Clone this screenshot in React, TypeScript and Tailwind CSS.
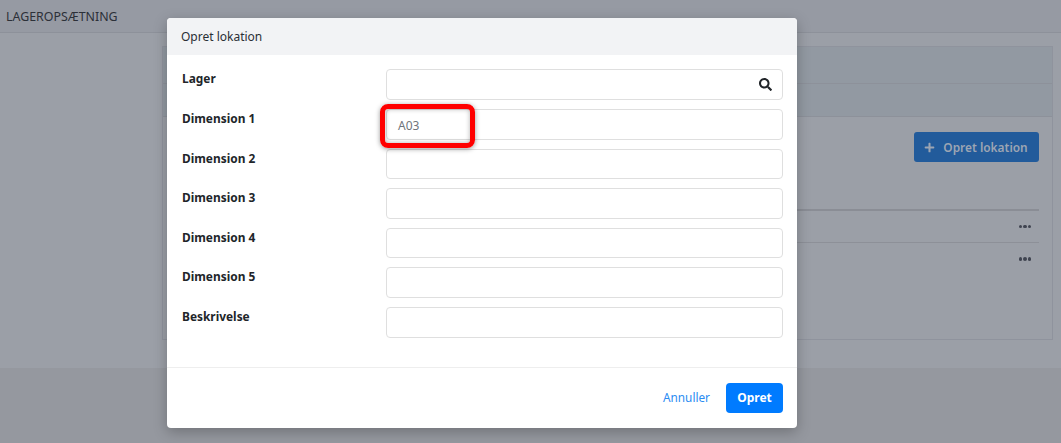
import { FaSearch, FaPlus } from "react-icons/fa";

const fields = [
  { label: "Dimension 1", value: "A03", h: "h-[31px]", mb: "mb-[9px]" },
  { label: "Dimension 2", value: "", h: "h-[30px]", mb: "mb-[9px]" },
  { label: "Dimension 3", value: "", h: "h-[31px]", mb: "mb-[9px]" },
  { label: "Dimension 4", value: "", h: "h-[30px]", mb: "mb-[9px]" },
  { label: "Dimension 5", value: "", h: "h-[31px]", mb: "mb-[9px]" },
  { label: "Beskrivelse", value: "", h: "h-[31px]", mb: "" },
];

function Dots() {
  return (
    <div className="flex gap-[1px] mr-[8px]">
      <span className="w-[3.5px] h-[3.5px] rounded-full bg-[#3f4450]" />
      <span className="w-[3.5px] h-[3.5px] rounded-full bg-[#3f4450]" />
      <span className="w-[3.5px] h-[3.5px] rounded-full bg-[#3f4450]" />
    </div>
  );
}

export default function App() {
  return (
    <div className="relative h-[443px] w-full overflow-hidden bg-[#95989f] font-['Noto_Sans',sans-serif] text-[13px] text-[#212529]">
      <div className="h-[368px] bg-[#9b9fa7]">
        <div className="h-[33px] bg-[#969aa3] border-b border-[#8d919a] pl-[6px] pt-[8px] text-[12.4px] leading-[17px] text-[#2c3038]">
          LAGEROPSÆTNING
        </div>
        <div className="ml-[162px] mr-[8px] mt-[13px] h-[294px] border border-[#8f939d]">
          <div className="h-[37px] bg-[#9299a2] border-b border-[#8d919a]" />
          <div className="h-[33px] bg-[#9299a2] border-b border-[#8d919a]" />
          <div className="pl-[13px] pr-[13px]">
            <div className="flex justify-end pt-[15px] h-[92px]">
              <button className="flex items-center justify-center gap-[8px] w-[125px] h-[30px] pt-[1px] pr-[1px] rounded-[3px] bg-[#225b9b] text-[#9ca5b3] font-semibold text-[11.9px]">
                <FaPlus size={11} />
                Opret lokation
              </button>
            </div>
            <div className="h-[33px] border-t-2 border-[#8a8d95] flex items-center justify-end">
              <Dots />
            </div>
            <div className="h-[33px] border-t border-[#8d9098] flex items-center justify-end">
              <Dots />
            </div>
          </div>
        </div>
      </div>

      <div className="absolute left-[167px] top-[18px] w-[630px] h-[410px] bg-white rounded-[4px] shadow-[0_4px_14px_rgba(0,0,0,0.25)] overflow-hidden flex flex-col">
        <div className="h-[37px] bg-[#f2f3f5] pl-[14px] flex items-center pt-[1px] text-[12px] text-[#2a2f36]">
          Opret lokation
        </div>
        <div className="h-[313px] border-b border-[#eeeeee] pt-[14px] pl-[15px] pr-[14px]">
          <div className="flex mb-[9px]">
            <label className="w-[204px] font-bold text-[11.9px] leading-[18px]">Lager</label>
            <div className="flex-1 h-[31px] border border-[#dfdfdf] rounded-[4px] flex items-center justify-end pr-[10px]">
              <FaSearch size={13} className="text-[#212529]" />
            </div>
          </div>
          {fields.map((f) => (
            <div key={f.label} className={`flex ${f.mb}`}>
              <label className="w-[204px] font-bold text-[11.9px] leading-[18px]">{f.label}</label>
              <div className={`flex-1 ${f.h} border border-[#dfdfdf] rounded-[4px] flex items-center pl-[11px] pt-[2px] text-[12px] text-[#6f757b]`}>
                {f.value}
              </div>
            </div>
          ))}
        </div>
        <div className="flex-1 flex items-start justify-end pt-[15px] pr-[14px] gap-[16px]">
          <button className="h-[30px] text-[11.8px] text-[#2a8bf2]">Annuller</button>
          <button className="h-[30px] w-[57px] rounded-[4px] bg-[#007bff] text-white font-bold text-[12px]">Opret</button>
        </div>
      </div>

      <div className="absolute left-[380px] top-[104px] w-[95px] h-[44px] border-[5px] border-[#ff0000] rounded-[8px] shadow-[0_1px_5px_rgba(0,0,0,0.4),inset_0_0_5px_rgba(0,0,0,0.3)]" />
    </div>
  );
}
